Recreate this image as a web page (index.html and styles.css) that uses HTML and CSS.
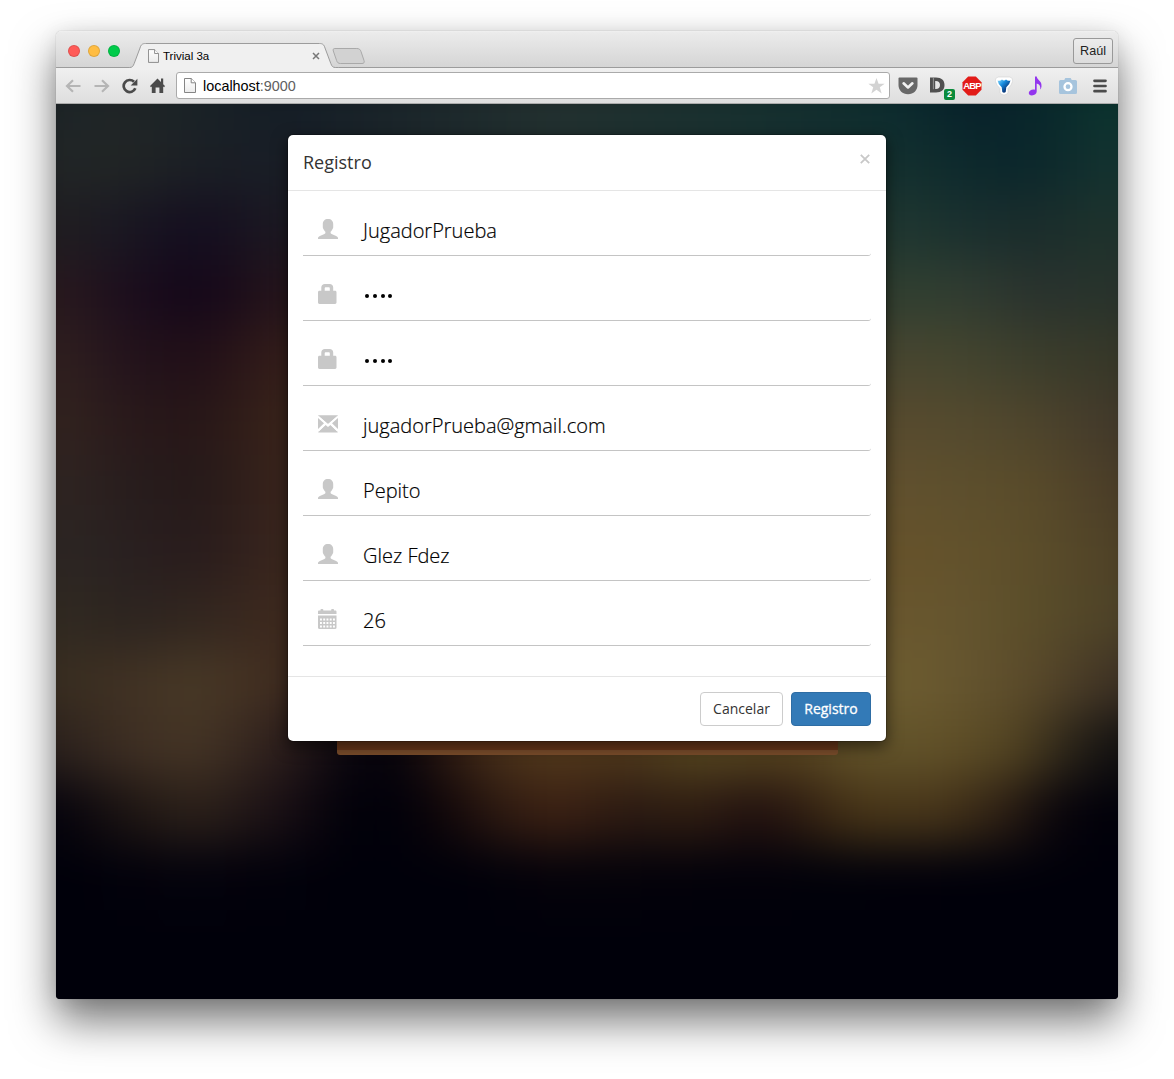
FILE: index.html
```html
<!DOCTYPE html>
<html lang="es">
<head>
<meta charset="utf-8">
<title>Trivial 3a</title>
<link rel="stylesheet" href="styles.css">
</head>
<body>
<svg class="defs" width="0" height="0" aria-hidden="true">
  <defs>
    <linearGradient id="page-fill" x1="0" y1="0" x2="0" y2="1"><stop offset="0" stop-color="#fff"/><stop offset="1" stop-color="#ececec"/></linearGradient>
    <linearGradient id="blue-fill" x1="0" y1="0" x2="1" y2="1"><stop offset="0" stop-color="#8fdcfb"/><stop offset=".35" stop-color="#1a8fe0"/><stop offset=".7" stop-color="#0a3f86"/><stop offset="1" stop-color="#06254f"/></linearGradient>
    <symbol id="file" viewBox="0 0 12 15"><path d="M.5.5h6.700l4.300 4.300v9.700H.5z" fill="url(#page-fill)" stroke="#858585"/><path d="M7.200.5v4.300h4.300" fill="#fff" stroke="#858585"/></symbol>
    <symbol id="user" viewBox="0 0 20 20"><path d="M10 0c3.300 0 5.200 2.100 5.200 5.100v3c0 1.400-.6 2-1.100 2.700-.4 1-.9 1.500-1.500 2v1c0 .6.500.9 1 1.200l4.500 2c1.200.6 1.900 1.200 1.900 2.100V20H0v-.9c0-.9.700-1.500 1.900-2.100l4.500-2c.5-.3 1-.6 1-1.200v-1c-.6-.5-1.100-1-1.500-2-.5-.7-1.100-1.300-1.100-2.700v-3C4.800 2.100 6.700 0 10 0z"/></symbol>
    <symbol id="lock" viewBox="0 0 20 20"><path fill-rule="evenodd" d="M3.300 6.800V3.500C3.300 1.500 4.800 0 6.800 0h4.900c2 0 3.500 1.500 3.500 3.500v3.300h1.900c.8 0 1.400.6 1.400 1.400v10.400c0 .8-.6 1.400-1.400 1.400H1.400C.6 20 0 19.400 0 18.600V8.200c0-.8.6-1.400 1.400-1.400zM6.700 6.800h5.100V4.400c0-.8-.4-1.200-1.200-1.200H7.900c-.8 0-1.200.4-1.200 1.200z"/></symbol>
    <symbol id="mail" viewBox="0 0 20 18"><path d="M.3.300h19.400v.6L10 9 .3.900zM0 2.900 6 8.200 0 14zM20 2.900V14l-6-5.800zM7.600 9.900 10 12.100l2.400-2.200 7.300 6.900v.7H.3v-.7z"/><path d="m.3 1.500 9.700 8.800 9.700-8.800M.3 16l7-7M19.700 16l-7-7" fill="none" stroke="#fff" stroke-width="1.500"/></symbol>
    <symbol id="calendar" viewBox="0 0 20 20"><path fill-rule="evenodd" d="M0 5V2.700c0-.7.500-1.200 1.200-1.200h1.300V.8c0-.5.300-.8.800-.8h1.200c.5 0 .8.300.8.800v.7h7.900V.8c0-.5.300-.8.800-.8h1.200c.5 0 .8.300.8.800v.7h1.300c.7 0 1.200.5 1.200 1.200V5zM0 6.500h18.500v12.300c0 .7-.5 1.200-1.200 1.200H1.200C.5 20 0 19.500 0 18.800z"/><path d="M2 10.500h15M2 14h15M2 17.500h15" stroke="#fff" stroke-width="1.900" stroke-dasharray="1.900 1.350"/></symbol>
  </defs>
</svg>

<div class="window">
  <div class="tabstrip">
    <div class="lights"><i class="red"></i><i class="yellow"></i><i class="green"></i></div>
    <div class="tab">
      <svg class="tab-shape" width="240" height="26" viewBox="0 0 240 26"><path d="M-3 24.500H-.5c3 0 3.700-1.500 4.700-4L10 5c1-3.500 2.500-4.500 5.500-4.500h174c3 0 4.500 1 5.500 4.500l5.800 15.500c1 2.500 1.700 4 4.700 4h3V27H-3z" fill="#f0f0f0"/><path d="M-3 24.500H-.5c3 0 3.700-1.500 4.700-4L10 5c1-3.500 2.500-4.500 5.500-4.500h174c3 0 4.500 1 5.500 4.500l5.800 15.500c1 2.500 1.700 4 4.700 4h3" fill="none" stroke="#9c9c9c"/><path d="M204.800 5.500h22c2.500 0 3.500 1 4.200 3l3 9c.7 2-.1 3-2 3h-21.500c-2.300 0-3.200-.9-3.900-3l-3.300-9.500c-.5-1.600 0-2.500 1.500-2.500z" fill="#d2d2d2" stroke="#a9a9a9"/></svg>
      <div class="tab-content"><svg class="tab-file"><use href="#file"/></svg><span>Trivial 3a</span><svg class="tab-close" viewBox="0 0 8 8"><path d="M1 1l6 6M7 1 1 7" stroke="#777" stroke-width="1.500"/></svg></div>
    </div>
    <div class="profile">Raúl</div>
  </div>

  <div class="toolbar">
    <svg class="nav" viewBox="0 0 16 14"><path d="M15.500 7H2M8 1.200 2 7l6 5.800" fill="none" stroke="#b5b5b5" stroke-width="2.200"/></svg>
    <svg class="nav forward" viewBox="0 0 16 14"><path d="M.5 7H14M8 1.200 14 7l-6 5.800" fill="none" stroke="#b5b5b5" stroke-width="2.200"/></svg>
    <svg class="reload" viewBox="0 0 16 16"><path d="M13.300 10.200A6 6 0 1 1 12 3.800" fill="none" stroke="#4b4b4b" stroke-width="2.700"/><path d="M15.400.8v6.700H8.700z" fill="#4b4b4b"/></svg>
    <svg class="home" viewBox="0 0 15 15"><path d="M7.500.5 11 4V.5h2.200v5.700L15 8l-.9 1.200-.9-.7V15H9.400V9.500H5.600V15H1.800V8.500l-.9.700L0 8z" fill="#4b4b4b"/></svg>
    <div class="address"><svg class="address-file"><use href="#file"/></svg><span class="host">localhost</span><span class="port">:9000</span><svg class="star" viewBox="0 0 18 17"><path d="m9 0 2.200 6h6.500l-5.200 3.900 2 6.600L9 12.600l-5.500 3.900 2-6.600L.3 6h6.500z" fill="#d3d3d3"/></svg></div>
    <div class="extensions">
      <svg class="ext" viewBox="0 0 20 20"><path d="M1.500 1.500h17q1 0 1 1V9c0 5.500-4 9.300-9.500 9.300S.5 14.500.5 9V2.500q0-1 1-1z" fill="#686868"/><path d="m5.600 7.300 4.400 4.200 4.400-4.200" fill="none" stroke="#f2f2f2" stroke-width="2.600" stroke-linecap="round" stroke-linejoin="round"/></svg>
      <div class="ext disconnect"><svg viewBox="0 0 20 20"><path fill-rule="evenodd" d="M0 1.500h6c5.500 0 8.500 2.800 8.500 7.500s-3 7.500-8.500 7.500H0zM5.200 5v8c3 .3 4.800-1.200 4.800-4S8.200 4.800 5.200 5z" fill="#505050"/><path d="M3.400 1.500v11.700" stroke="#a5a5a5" stroke-width=".8"/></svg><b>2</b></div>
      <div class="ext"><svg viewBox="0 0 20 20"><path d="M6.200.5h7.600l5.700 5.700v7.600l-5.700 5.700H6.200L.5 13.800V6.200z" fill="#e21b18"/></svg><em>ABP</em></div>
      <svg class="ext" viewBox="0 0 20 20"><path d="M4 1h12q3.200 1 2.600 4.300-.8 4-4.600 7.200v4.500q-4 4-8 0v-4.500Q2.200 9.300 1.400 5.300.8 2 4 1z" fill="#fff" stroke="#d0d0d0" stroke-width=".6"/><path d="M3.500 4.500Q6 5.500 8 3.500q2 2 4 0 2 2 4.500 1-.5 3.500-4.200 6.800L11.700 16q-1.700 1.500-3.400 0l-.6-4.700Q4 8 3.500 4.500z" fill="url(#blue-fill)"/></svg>
      <svg class="ext" viewBox="0 0 20 20"><path d="M10 .5h1.700c.4 3.800 5.300 4.100 4.800 9.700-.1 1.500-.7 2.700-1.300 3.400.5-3.600-.7-5.500-3.500-6.200v8.200c0 2.100-2 3.800-4.800 3.800-2 0-3.300-1-3.100-2.600.2-2 2.300-3.400 4.500-3.400.7 0 1.200.1 1.700.3z" fill="#9336ee" transform="translate(-1 0)"/></svg>
      <svg class="ext" viewBox="0 0 20 20"><path d="M2.500 4h3.800l1-2h5.400l1 2h3.800q1.500 0 1.500 1.500v11q0 1.500-1.500 1.500h-15Q1 18 1 16.500v-11Q1 4 2.500 4z" fill="#a6c4dd"/><circle cx="10" cy="10.700" r="3.500" fill="none" stroke="#fff" stroke-width="2.300"/></svg>
      <svg class="ext" viewBox="0 0 20 20"><path d="M4.500 4.800h11M4.500 10h11M4.500 15.200h11" stroke="#4b4b4b" stroke-width="2.700" stroke-linecap="round"/></svg>
    </div>
  </div>

  <main class="page">
    <div class="backdrop"></div>
    <div class="login-edge"></div>
    <section class="modal">
      <header class="modal-header"><h4>Registro</h4><svg class="close" viewBox="0 0 10 10"><path d="m.8.800 8.400 8.400M9.200.8.800 9.200" stroke="#c8c8c8" stroke-width="1.800"/></svg></header>
      <div class="modal-body">
        <div class="field"><svg><use href="#user"/></svg><span>JugadorPrueba</span></div>
        <div class="field"><svg><use href="#lock"/></svg><span class="password"><i></i><i></i><i></i><i></i></span></div>
        <div class="field"><svg><use href="#lock"/></svg><span class="password"><i></i><i></i><i></i><i></i></span></div>
        <div class="field"><svg class="mail"><use href="#mail"/></svg><span>jugadorPrueba@gmail.com</span></div>
        <div class="field"><svg><use href="#user"/></svg><span>Pepito</span></div>
        <div class="field"><svg><use href="#user"/></svg><span>Glez Fdez</span></div>
        <div class="field"><svg><use href="#calendar"/></svg><span>26</span></div>
      </div>
      <footer class="modal-footer"><button class="btn cancel">Cancelar</button><button class="btn primary">Registro</button></footer>
    </section>
  </main>
</div>
</body>
</html>
```
FILE: styles.css
```css
* { box-sizing: border-box; }
body {
  margin: 0;
  height: 1079px;
  padding: 31px 56px 80px;
  overflow: hidden;
  background: #fff;
  font-family: "Open Sans", sans-serif;
}
.defs { position: absolute; }
svg { display: block; flex: none; }

.window {
  width: 1062px;
  height: 968px;
  display: flex;
  flex-direction: column;
  border-radius: 5px;
  box-shadow: 0 0 1px rgba(0,0,0,.4), 0 22px 44px rgba(0,0,0,.54), 0 2px 20px rgba(0,0,0,.08);
}

/* Browser chrome */
.tabstrip {
  height: 37px;
  display: flex;
  align-items: flex-end;
  padding-left: 12px;
  background: linear-gradient(#f0f0f0, #ebebeb 5%, #d5d5d5);
  border-bottom: 1px solid #9c9c9c;
  border-radius: 5px 5px 0 0;
  font: 12px "Liberation Sans", sans-serif;
}
.lights { display: flex; gap: 8px; align-self: flex-start; padding-top: 14px; width: 62px; }
.lights i { width: 12px; height: 12px; border-radius: 50%; border: 1px solid rgba(0,0,0,.12); }
.red { background: #ff5b58; }
.yellow { background: #ffbd43; }
.green { background: #00cb4a; }
.tab { position: relative; width: 240px; height: 25px; margin-bottom: -1px; }
.tab-shape { position: absolute; left: 0; top: 0; overflow: visible; }
.tab-content { position: relative; display: flex; align-items: center; height: 26px; padding-left: 18px; width: 190px; font-size: 11.5px; color: #000; }
.tab-file { width: 11px; height: 14px; margin-right: 4px; }
.tab-close { width: 8px; height: 8px; margin-left: auto; }
.profile {
  width: 40px;
  height: 26px;
  margin: 0 5px 3px auto;
  border: 1px solid #999;
  border-radius: 3px;
  background: linear-gradient(#ececec, #dcdcdc);
  font-size: 12.6px;
  line-height: 25px;
  text-align: center;
  color: #222;
}
.toolbar {
  height: 36px;
  display: flex;
  align-items: center;
  padding-left: 9px;
  background: linear-gradient(#f0f0f0, #dedede);
  border-bottom: 1px solid #ababab;
  font-family: "Liberation Sans", sans-serif;
}
.nav { width: 16px; height: 14px; }
.forward { margin-left: 13px; }
.reload { width: 16px; height: 16px; margin-left: 12px; }
.home { width: 15px; height: 15px; margin-left: 12px; }
.address {
  width: 714px;
  height: 27px;
  margin-left: 11px;
  padding: 0 4px 0 7px;
  display: flex;
  align-items: center;
  background: #fff;
  border: 1px solid #aaa;
  border-radius: 3px;
  font-size: 14.4px;
}
.address-file { width: 12px; height: 15px; margin-right: 7px; }
.host { color: #000; }
.port { color: #606060; }
.star { width: 17px; height: 16px; margin-left: auto; }
.extensions { display: flex; gap: 12px; margin-left: 8px; }
.ext { position: relative; width: 20px; height: 20px; }
.disconnect b {
  position: absolute;
  left: 14px;
  top: 13px;
  width: 11px;
  height: 11px;
  border-radius: 2px;
  background: #0a8b3c;
  color: #fff;
  font-size: 9px;
  line-height: 11px;
  text-align: center;
}
.ext em { position: absolute; inset: 0; text-align: center; font: bold 9.5px/20px "Liberation Sans", sans-serif; letter-spacing: -.8px; color: #fff; }

/* Page */
.page {
  position: relative;
  height: 895px;
  overflow: hidden;
  padding-top: 30px;
  background: #00000a;
  border-radius: 0 0 4px 4px;
}
.backdrop {
  position: absolute;
  inset: -40px;
  filter: blur(24px);
  background:
    linear-gradient(90deg, #1c2427 40px, #202627 110px, #1a2327 180px, #141d26 270px, #22302f 540px, #16302f 740px, #0b2b2e 890px, #07202a 950px, #08262b 1020px, #0b352f 1102px) 0 0 / 100% 66px no-repeat,
    linear-gradient(90deg, #212526 40px, #212525 110px, #1b1f25 180px, #181d26 270px, #22302f 540px, #122f2e 890px, #0b272c 970px, #0b272b 1020px, #143430 1102px) 0 65px / 100% 66px no-repeat,
    linear-gradient(90deg, #201e21 40px, #191722 110px, #140d1f 180px, #1c1922 270px, #1f3730 890px, #1a302f 940px, #1a2c2b 1020px, #1e332d 1102px) 0 130px / 100% 66px no-repeat,
    linear-gradient(90deg, #29191e 40px, #1c0e1d 110px, #130619 180px, #26151b 270px, #303f30 890px, #313d31 940px, #29322d 1020px, #28332c 1102px) 0 195px / 100% 66px no-repeat,
    linear-gradient(90deg, #30201f 40px, #23131c 110px, #200e17 180px, #351e1a 270px, #474630 890px, #44452f 940px, #3b3d2c 1020px, #363728 1102px) 0 260px / 100% 66px no-repeat,
    linear-gradient(90deg, #33241f 40px, #29191b 110px, #261617 180px, #3a241a 270px, #574b2e 890px, #544a2e 940px, #4d442c 1020px, #41382a 1102px) 0 325px / 100% 66px no-repeat,
    linear-gradient(90deg, #2f2522 40px, #281d1d 110px, #251919 180px, #3a241c 270px, #61512e 890px, #5d4f2d 940px, #594b2a 1020px, #493c28 1102px) 0 390px / 100% 66px no-repeat,
    linear-gradient(90deg, #2c2623 40px, #292020 110px, #281b1c 180px, #3a261d 270px, #66532b 890px, #63522c 940px, #5b4d2a 1020px, #4e4127 1102px) 0 455px / 100% 66px no-repeat,
    linear-gradient(90deg, #312a21 40px, #2c2420 110px, #32261f 180px, #3e291e 270px, #69572e 890px, #65552f 940px, #5a4d29 1020px, #4d4228 1102px) 0 520px / 100% 66px no-repeat,
    linear-gradient(90deg, #382d20 40px, #403123 110px, #483926 180px, #402c20 270px, #281812 330px, #1c120e 380px, #48301a 480px, #55441f 680px, #6e5d31 890px, #66562f 940px, #59492a 1020px, #3c3024 1102px) 0 585px / 100% 66px no-repeat,
    linear-gradient(90deg, #2a201c 40px, #3d2e23 110px, #453525 180px, #2a1c1b 270px, #0a060e 330px, #04020b 380px, #2a1710 430px, #48301a 480px, #52391b 540px, #4c351b 610px, #54451f 680px, #54401e 780px, #615229 840px, #625229 920px, #524321 1000px, #2c2519 1050px, #100f10 1102px) 0 650px / 100% 66px no-repeat,
    linear-gradient(90deg, #04020c 40px, #1c1412 110px, #2c211a 180px, #180e14 270px, #010009 330px, #00000a 380px, #100609 430px, #2c1911 480px, #3d2113 540px, #2a1912 610px, #2f1d11 680px, #200f10 740px, #2c1a10 780px, #473417 840px, #48361a 920px, #2c1e13 990px, #08040b 1040px, #00000a 1102px) 0 715px / 100% 66px no-repeat,
    linear-gradient(90deg, #00000a 60px, #04020c 170px, #00000a 330px, #00000a 450px, #05020a 550px, #02010a 700px, #00000a 1000px) 0 780px / 100% 66px no-repeat,
    #00000a;
}
.login-edge {
  position: absolute;
  left: 281px;
  top: 600px;
  width: 501px;
  height: 51px;
  background: #6a371a;
  border-bottom: 5px solid #7a4d2b;
  border-radius: 0 0 3px 3px;
}
.modal {
  position: relative;
  width: 600px;
  height: 608px;
  margin: 0 auto;
  border: 1px solid rgba(0,0,0,.2);
  border-radius: 6px;
  background: #fff;
  background-clip: padding-box;
  box-shadow: 0 5px 15px rgba(0,0,0,.5);
}
.modal-header {
  height: 56px;
  padding: 15px 16px 0 15px;
  display: flex;
  justify-content: space-between;
  border-bottom: 1px solid #e5e5e5;
}
.modal-header h4 { margin: 0; font-size: 18px; font-weight: 400; line-height: 25px; color: #333; }
.close { width: 10px; height: 10px; margin-top: 4px; }
.modal-body { height: 485px; padding: 15px; display: flex; flex-direction: column; gap: 15px; }
.field {
  height: 50px;
  padding-left: 15px;
  display: flex;
  align-items: flex-start;
  border-bottom: 1px solid #c4c4c4;
  border-radius: 0 0 3px 0;
  font-size: 20px;
  font-weight: 300;
  line-height: 50px;
  color: #000;
  -webkit-text-stroke: .2px #000;
}
.field svg { width: 20px; height: 20px; margin: 13px 25px 0 0; fill: #c8c8c8; }
.field .mail { height: 18px; margin-top: 14px; }
.password { display: flex; gap: 3.800px; padding: 23px 0 0 2px; }
.password i { width: 4px; height: 4px; border-radius: 50%; background: #000; }
.modal-footer {
  height: 65px;
  padding: 15px;
  display: flex;
  justify-content: flex-end;
  gap: 8px;
  border-top: 1px solid #e5e5e5;
}
.btn {
  height: 34px;
  padding: 0;
  border: 1px solid #ccc;
  border-radius: 4px;
  background: #fff;
  font: 14px/20px "Open Sans", sans-serif;
  color: #333;
}
.cancel { width: 83px; }
.primary { width: 80px; background: #337ab7; border-color: #2e6da4; color: #fff; -webkit-text-stroke: .3px #fff; }
```
